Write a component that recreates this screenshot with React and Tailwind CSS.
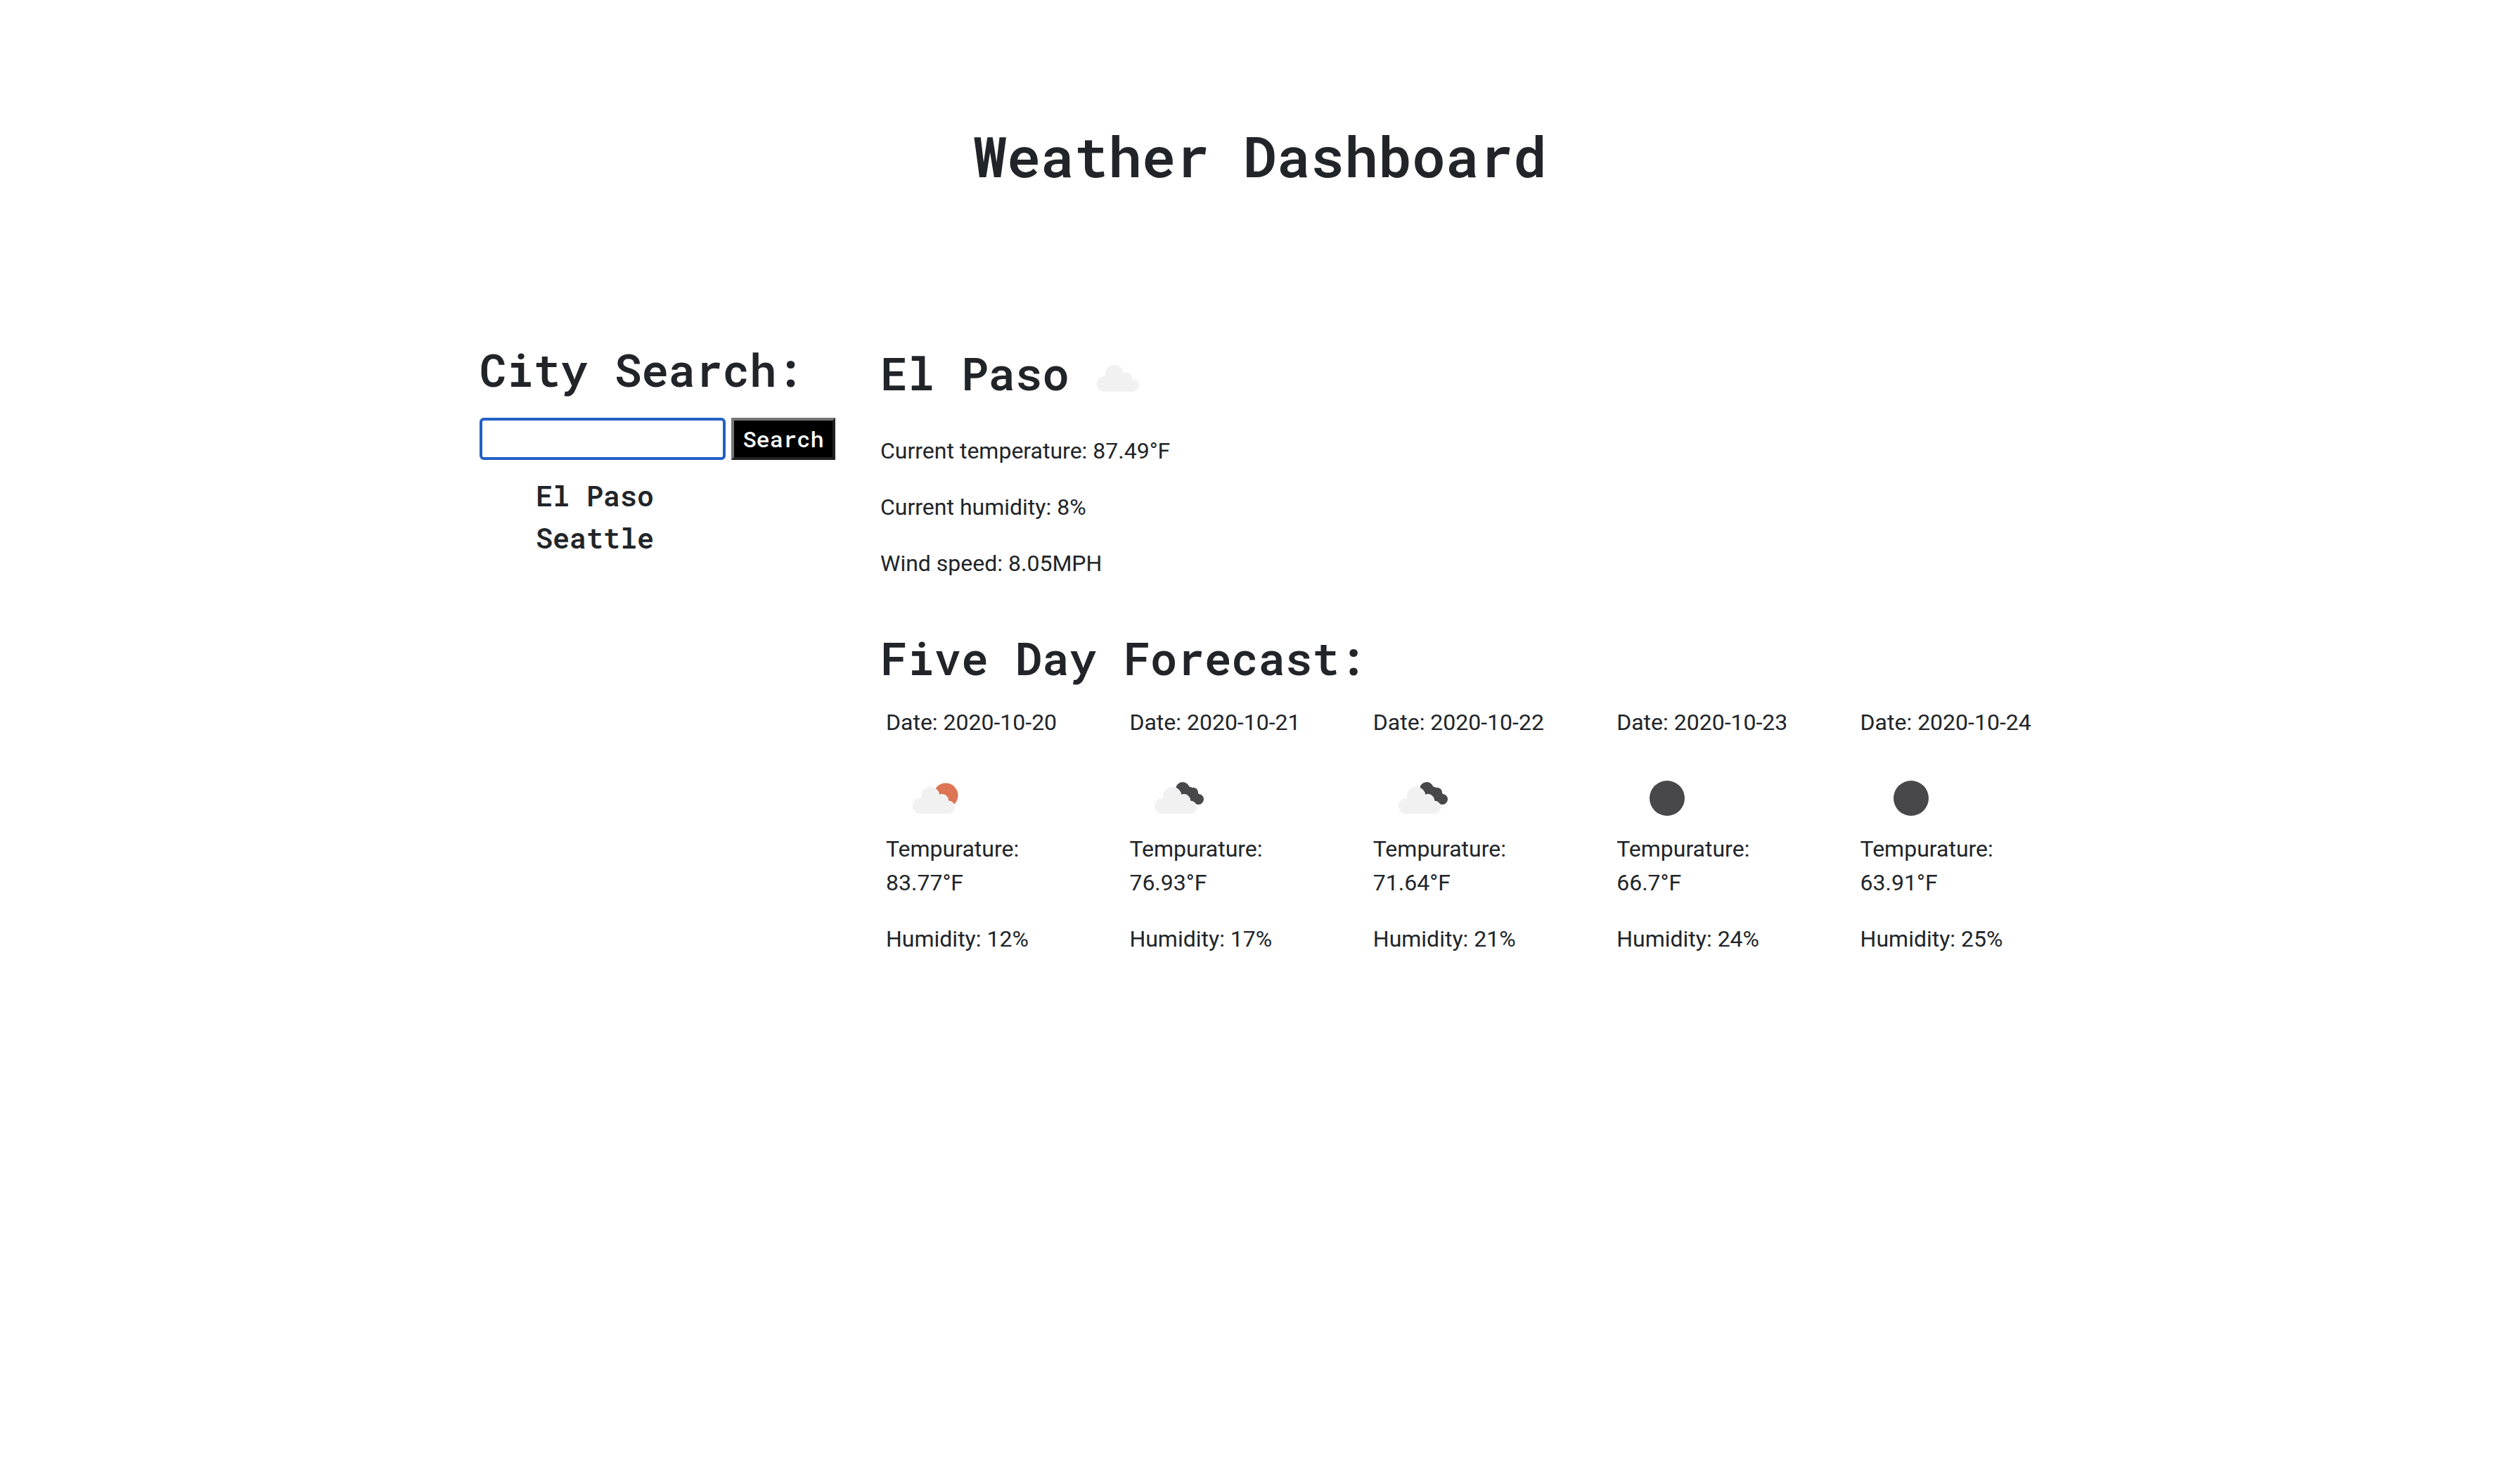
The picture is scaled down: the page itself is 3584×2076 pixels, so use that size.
const FORECAST = [
  { date: "2020-10-20", icon: "sun", temp: "83.77", humidity: 12 },
  { date: "2020-10-21", icon: "clouds", temp: "76.93", humidity: 17 },
  { date: "2020-10-22", icon: "clouds", temp: "71.64", humidity: 21 },
  { date: "2020-10-23", icon: "night", temp: "66.7", humidity: 24 },
  { date: "2020-10-24", icon: "night", temp: "63.91", humidity: 25 },
];

const CITIES = ["El Paso", "Seattle"];

// Cloud built from overlapping puffs in a 60x38 box
function CloudShape() {
  return (
    <>
      <circle cx="11" cy="27" r="11" />
      <circle cx="25" cy="13" r="13" />
      <circle cx="42" cy="19" r="8.5" />
      <circle cx="51" cy="29" r="9" />
      <path d="M11 38V17L25 10L42 16L51 22V38Z" />
    </>
  );
}

function Cloud() {
  return (
    <svg className="mt-4 h-[38px] w-[60px]" viewBox="0 0 60 38" role="img" aria-label="Cloudy">
      <g fill="#f1f1f1">
        <CloudShape />
      </g>
    </svg>
  );
}

function WeatherIcon({ kind }) {
  if (kind === "night") {
    return (
      <svg className="ml-[22px] size-[100px]" viewBox="0 0 100 100" aria-hidden="true">
        <circle cx="50" cy="52" r="25" fill="#48484a" />
      </svg>
    );
  }
  const place = kind === "sun" ? "translate(16 36)" : "translate(14 36)";
  return (
    <svg className="ml-[22px] size-[100px]" viewBox="0 0 100 100" aria-hidden="true">
      {kind === "sun" ? (
        <circle cx="63" cy="48" r="17.5" fill="#dd7555" />
      ) : (
        <g fill="#48484a">
          <circle cx="54" cy="39" r="10" />
          <circle cx="69.5" cy="43.5" r="6.5" />
          <circle cx="76.5" cy="53.5" r="7.5" />
          <path d="M54 49L46 42L62 35L71 38L80 50L76 61L66 57Z" />
        </g>
      )}
      <g transform={place} fill="#fff" stroke="#fff" strokeWidth="1">
        <CloudShape />
      </g>
      <g transform={place} fill="#f1f1f1">
        <CloudShape />
      </g>
    </svg>
  );
}

export default function App() {
  return (
    <div className="min-h-screen bg-white font-['Roboto',sans-serif] text-[32px] leading-[48px] text-[#212529]">
      <div className="mx-auto max-w-[2280px]">
        <h1 className="pt-[173px] text-center font-['Roboto_Mono','DejaVu_Sans_Mono',monospace] text-[80px] leading-[96px] font-semibold">
          Weather Dashboard
        </h1>
        <div className="mt-[218px] grid grid-cols-[1fr_3fr]">
          <aside className="pl-[30px] font-['Roboto_Mono','DejaVu_Sans_Mono',monospace]">
            <h2 className="text-[64px] leading-[76px] font-semibold whitespace-nowrap">
              <label htmlFor="city">City Search:</label>
            </h2>
            <form className="mt-[31px] flex gap-2" onSubmit={(e) => e.preventDefault()}>
              <input
                id="city"
                type="text"
                className="h-[60px] w-[350px] rounded-md border-4 border-[#2360c5] px-2 outline-none"
              />
              <button
                type="submit"
                className="h-[60px] w-[148px] border-4 border-t-[#767676] border-r-[#212121] border-b-[#212121] border-l-[#767676] bg-black leading-[48px] font-medium text-white"
              >
                Search
              </button>
            </form>
            <ul className="mt-[21px] pl-20 text-[40px] leading-[60px] font-semibold">
              {CITIES.map((c) => (
                <li key={c}>{c}</li>
              ))}
            </ul>
          </aside>
          <main className="pl-[30px]">
            <h2 className="mt-[5px] flex items-center gap-[39px] font-['Roboto_Mono','DejaVu_Sans_Mono',monospace] text-[64px] leading-[76px] font-semibold">
              El Paso <Cloud />
            </h2>
            <div className="mt-[49px] flex flex-col gap-8">
              <p>Current temperature: 87.49°F</p>
              <p>Current humidity: 8%</p>
              <p>Wind speed: 8.05MPH</p>
            </div>
            <h2 className="mt-[72px] font-['Roboto_Mono','DejaVu_Sans_Mono',monospace] text-[64px] leading-[76px] font-semibold">
              Five Day Forecast:
            </h2>
            <div className="mt-[30px] grid grid-cols-5 gap-x-[60px] pl-2">
              {FORECAST.map((f) => (
                <article key={f.date}>
                  <p className="mb-8">Date: {f.date}</p>
                  <WeatherIcon kind={f.icon} />
                  <p className="mb-8">Tempurature: {f.temp}°F</p>
                  <p>Humidity: {f.humidity}%</p>
                </article>
              ))}
            </div>
          </main>
        </div>
      </div>
    </div>
  );
}
